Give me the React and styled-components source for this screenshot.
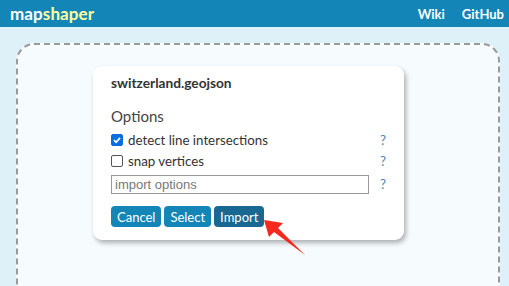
import React from "react";
import styled, { createGlobalStyle } from "styled-components";

const GlobalStyle = createGlobalStyle`
  html, body {
    margin: 0;
    padding: 0;
    background: #def0f8;
    font-family: Lato, "Open Sans", sans-serif;
    overflow: hidden;
  }
`;

const Header = styled.div`
  height: 27px;
  background: #1386b7;
  display: flex;
  align-items: center;
  justify-content: space-between;
  padding: 0 5px 0 10px;
  color: #fff;
  font-weight: 700;
`;

const Logo = styled.div`
  font-size: 17px;
  letter-spacing: 0.1px;
  span {
    color: #ffff9e;
  }
`;

const Nav = styled.div`
  display: flex;
  gap: 17px;
  font-size: 13px;
`;

const Main = styled.div`
  padding: 16px 9px 0 16px;
`;

const DropZone = styled.div`
  height: 260px;
  border: 2px dashed #9a9a9a;
  border-radius: 18px;
  background: #f6fbfe;
  padding: 21px 0 0 75px;
`;

const Dialog = styled.div`
  position: relative;
  width: 311px;
  box-sizing: border-box;
  background: #fff;
  border-radius: 9px;
  box-shadow: 2px 3px 5px rgba(0, 0, 0, 0.3);
  padding: 7px 18px 13px 18px;
  color: #333;
`;

const Title = styled.div`
  font-weight: 700;
  font-size: 13.7px;
  line-height: 20px;
  margin-bottom: 13px;
`;

const Heading = styled.div`
  font-size: 15px;
  line-height: 20px;
  color: #444;
  margin-bottom: 3px;
`;

const Row = styled.div`
  display: flex;
  align-items: center;
  justify-content: space-between;
  height: ${(p) => p.h || 21}px;
  font-size: 13.3px;
  color: #333;
`;

const Label = styled.label`
  display: flex;
  align-items: center;
  gap: 5px;
`;

const Box = styled.span`
  width: 12px;
  height: 12px;
  box-sizing: border-box;
  border-radius: 2px;
  border: 1px solid ${(p) => (p.checked ? "#0b6ee0" : "#555")};
  background: ${(p) => (p.checked ? "#0b6ee0" : "#fff")};
  display: flex;
  align-items: center;
  justify-content: center;
`;

const Help = styled.span`
  color: #4a86b8;
  font-size: 13.5px;
  width: 6px;
  text-align: center;
`;

const Input = styled.input`
  width: 258px;
  height: 19px;
  box-sizing: border-box;
  border: 1px solid #999;
  border-radius: 0;
  padding: 0 3px;
  font-family: "Liberation Sans", Arial, sans-serif;
  font-size: 13px;
  outline: none;
  &::placeholder {
    color: #777;
  }
`;

const Buttons = styled.div`
  display: flex;
  gap: 3px;
  margin-top: 9px;
`;

const Button = styled.button`
  height: 21px;
  padding: 0 6px;
  border: none;
  border-radius: 4px;
  background: ${(p) => (p.primary ? "#186891" : "#1386b7")};
  color: #fff;
  font-family: Lato, sans-serif;
  font-size: 13px;
  cursor: pointer;
`;

const Arrow = styled.svg`
  position: absolute;
  left: 171px;
  top: 154px;
  overflow: visible;
`;

const Check = () => (
  <svg width="10" height="10" viewBox="0 0 10 10">
    <path d="M2 5.2 L4.1 7.3 L8 2.8" fill="none" stroke="#fff" strokeWidth="1.8" />
  </svg>
);

export default function App() {
  return (
    <>
      <GlobalStyle />
      <Header>
        <Logo>
          map<span>shaper</span>
        </Logo>
        <Nav>
          <span>Wiki</span>
          <span>GitHub</span>
        </Nav>
      </Header>
      <Main>
        <DropZone>
          <Dialog>
            <Title>switzerland.geojson</Title>
            <Heading>Options</Heading>
            <Row>
              <Label>
                <Box checked>
                  <Check />
                </Box>
                detect line intersections
              </Label>
              <Help>?</Help>
            </Row>
            <Row>
              <Label>
                <Box />
                snap vertices
              </Label>
              <Help>?</Help>
            </Row>
            <Row h={26}>
              <Input placeholder="import options" />
              <Help>?</Help>
            </Row>
            <Buttons>
              <Button>Cancel</Button>
              <Button>Select</Button>
              <Button primary>Import</Button>
            </Buttons>
            <Arrow width="42" height="36" viewBox="0 0 42 36">
              <polygon points="0,0 19,3 14,8 41,35 10,12 5,17" fill="#f52a1f" />
            </Arrow>
          </Dialog>
        </DropZone>
      </Main>
    </>
  );
}
